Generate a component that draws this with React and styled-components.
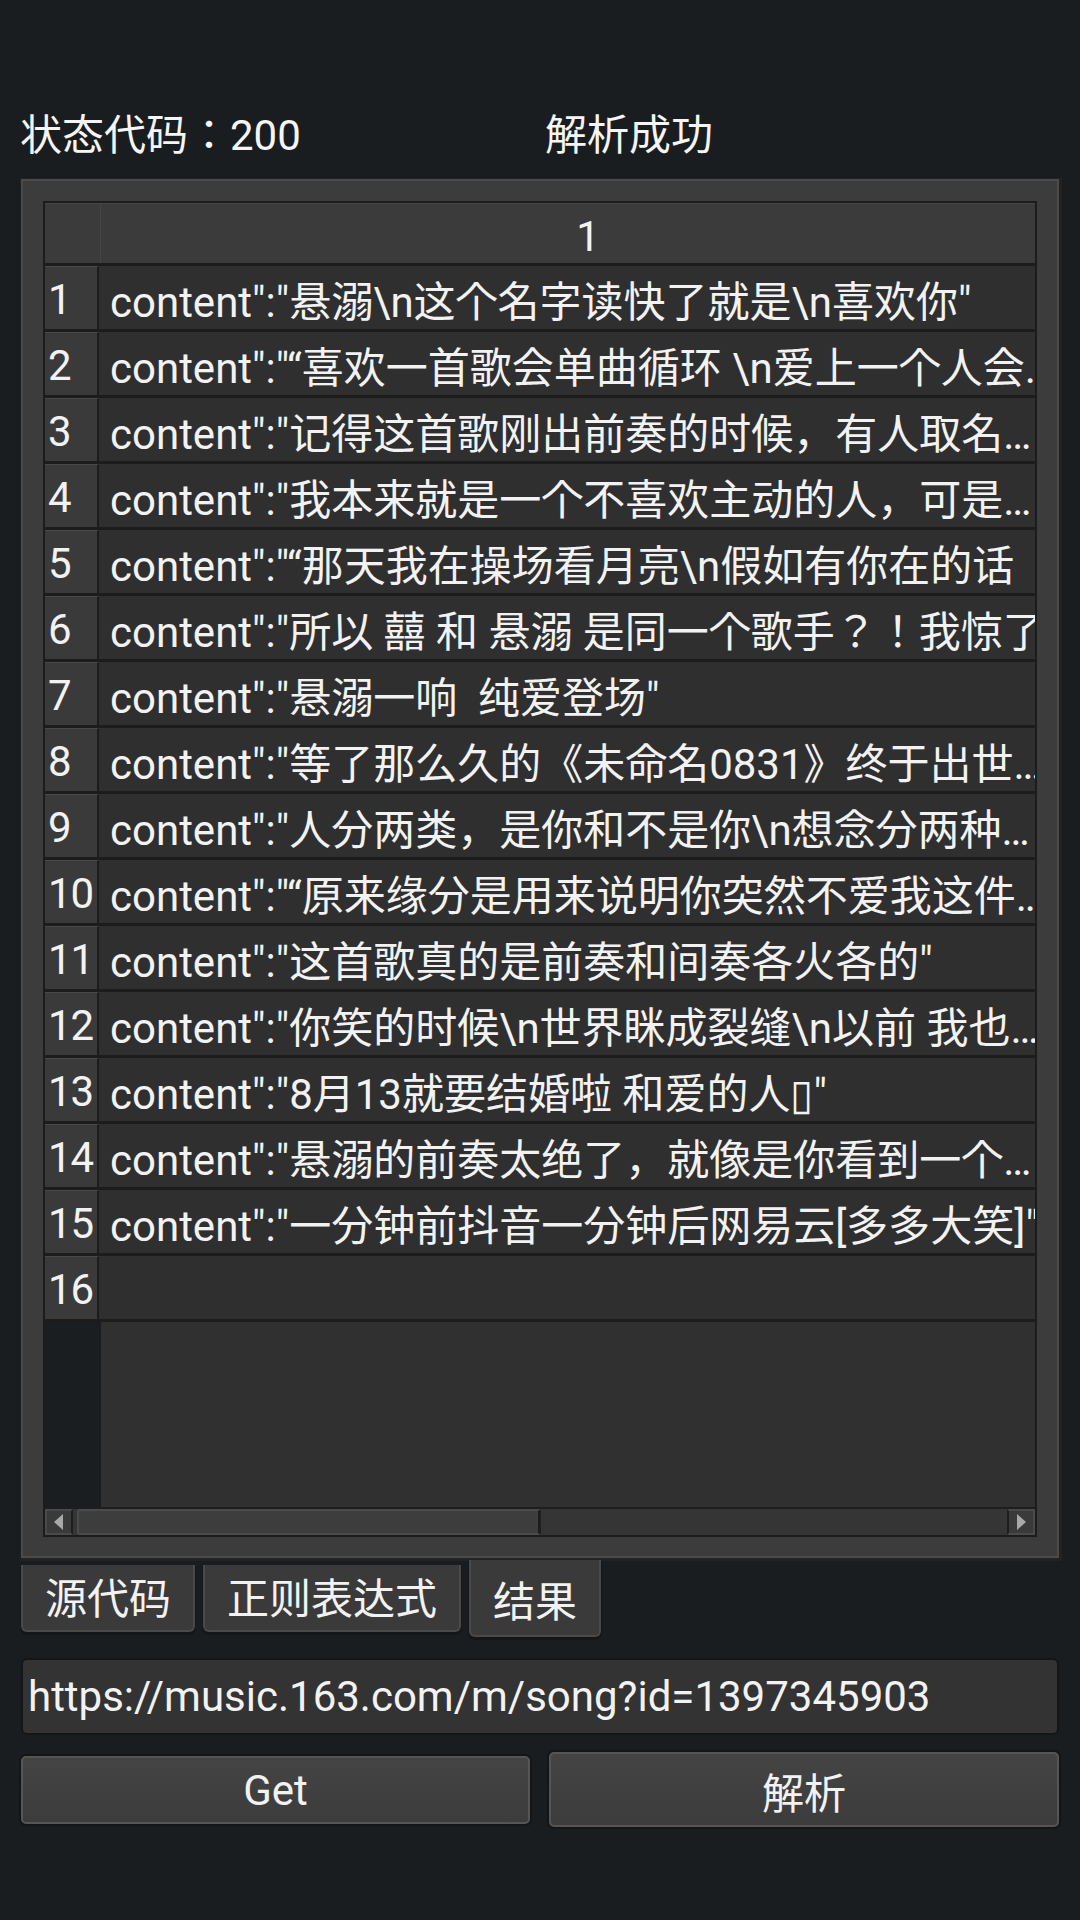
import React from 'react';
import styled, { createGlobalStyle } from 'styled-components';

const Global = createGlobalStyle`
  html, body { margin: 0; padding: 0; background: #1a1d20; }
  body {
    width: 1080px; height: 1920px; overflow: hidden;
    font-family: Roboto, "Noto Sans CJK JP", "Noto Sans CJK SC", sans-serif;
    color: #f2f2f2;
  }
`;

const Page = styled.div`
  width: 1080px; height: 1920px; box-sizing: border-box;
  padding: 108px 21px 0 21px;
  display: flex; flex-direction: column;
`;

const StatusBar = styled.div`
  display: grid; grid-template-columns: 525px 1fr;
  height: 56px; align-items: center;
  font-size: 42px; line-height: 56px; color: #f5f5f5;
  margin-left: -1px;
`;

const Panel = styled.div`
  margin-top: 15px; height: 1379px; box-sizing: border-box;
  background: #3c3c3c;
  border: 2px solid #4a4a4a;
  box-shadow: 0 0 0 1px #202224, 1px 1px 0 2px #222;
  padding: 20px 20px 19px 20px;
  display: flex;
`;

const Table = styled.div`
  flex: 1; display: flex; flex-direction: column;
  border: 2px solid #1b1c1d; background: #303030;
  overflow: hidden;
`;

const HeaderRow = styled.div`
  display: flex; height: 63px; box-sizing: border-box; flex: none;
  border-bottom: 3px solid #1c1c1c;
  background: #3b3b3b; border-top: 1px solid #474747;
`;

const Corner = styled.div`
  width: 55px; border-right: 1px solid #454545; flex: none;
`;

const HeaderCell = styled.div`
  flex: 1; display: flex; align-items: center; justify-content: center;
  padding: 6px 0 0 40px; font-size: 42px; color: #f2f2f2;
`;

const Row = styled.div`
  display: flex; height: 66px; box-sizing: border-box; flex: none;
  border-bottom: 3px solid #1c1c1c;
`;

const NumCell = styled.div`
  width: 54px; flex: none; box-sizing: border-box;
  background: #3a3a3a; border-top: 1px solid #4a4a4a;
  border-right: 2px solid #1c1c1c;
  display: flex; align-items: center; padding: 2px 0 0 3px;
  font-size: 42px; color: #f2f2f2; letter-spacing: -1px;
`;

const DataCell = styled.div`
  flex: 1; background: #2f2f2f; display: flex; align-items: center;
  padding: 1px 0 0 11px; overflow: hidden; white-space: pre;
  font-size: 42px; color: #f2f2f2;
`;

const Filler = styled.div`
  flex: 1; display: flex;
`;

const FillerNum = styled.div`
  width: 54px; flex: none; background: #1b1e21; border-right: 2px solid #1c1c1c;
`;

const FillerData = styled.div`
  flex: 1; background: #303030;
`;

const ScrollBar = styled.div`
  height: 28px; flex: none; display: flex; box-sizing: border-box;
  background: #353535; border-top: 2px solid #1e1e1e;
`;

const ArrowBtn = styled.div`
  width: 28px; flex: none; box-sizing: border-box;
  background: #3a3a3a; border: 2px solid #4a4a4a;
  display: flex; align-items: center; justify-content: center;
  ${p => p.$right ? 'border-left: 2px solid #1e1e1e; margin-left: auto;' : 'border-right: 2px solid #1e1e1e;'}
`;

const Thumb = styled.div`
  width: 464px; margin-left: 4px; box-sizing: border-box;
  background: #3d3d3d; border: 2px solid #4b4b4b; border-radius: 3px;
  border-right: 3px solid #1e1e1e;
`;

const Tabs = styled.div`
  display: flex; gap: 8px; align-items: flex-start;
  margin-top: 2px; height: 77px;
`;

const Tab = styled.div`
  box-sizing: border-box; padding: ${p => p.$active ? '10px' : '4px'} 22px 0;
  height: ${p => p.$active ? '77px' : '67px'};
  margin-top: ${p => p.$active ? '0' : '5px'};
  background: #3a3a3a;
  border: 2px solid #4a4a4a; border-top: none;
  border-radius: 0 0 6px 6px;
  box-shadow: 0 2px 0 1px #151617;
  display: flex; align-items: center; justify-content: center;
  font-size: 42px; line-height: 1; color: #f2f2f2;
`;

const UrlInput = styled.div`
  margin-top: 21px; height: 77px; box-sizing: border-box;
  background: #333333; border: 2px solid #141516; border-radius: 6px;
  display: flex; align-items: center; padding-left: 5px;
  font-size: 42px; color: #f2f2f2;
`;

const Buttons = styled.div`
  margin-top: 17px; height: 75px;
  display: grid; grid-template-columns: 509px 1fr; gap: 19px; align-items: center;
`;

const Button = styled.div`
  height: ${p => p.$tall ? '75px' : '68px'}; box-sizing: border-box;
  background: linear-gradient(#444444, #3c3c3c);
  border: 2px solid #555555; border-radius: 5px;
  box-shadow: 0 0 0 2px #141516;
  display: flex; align-items: center; justify-content: center;
  padding-top: 2px;
  font-size: 42px; color: #f2f2f2;
`;

const Arrow = ({ right }) => (
  <svg width="12" height="18" viewBox="0 0 12 18">
    {right
      ? <polygon points="2,1 11,9 2,17" fill="#a9a9a9" />
      : <polygon points="10,1 1,9 10,17" fill="#a9a9a9" />}
  </svg>
);

const rows = [
  'content":"悬溺\\n这个名字读快了就是\\n喜欢你"',
  'content":"“喜欢一首歌会单曲循环 \\n爱上一个人会…',
  'content":"记得这首歌刚出前奏的时候，有人取名…',
  'content":"我本来就是一个不喜欢主动的人，可是…',
  'content":"“那天我在操场看月亮\\n假如有你在的话',
  'content":"所以 囍 和 悬溺 是同一个歌手？！我惊了"',
  'content":"悬溺一响  纯爱登场"',
  'content":"等了那么久的《未命名0831》终于出世…',
  'content":"人分两类，是你和不是你\\n想念分两种…',
  'content":"“原来缘分是用来说明你突然不爱我这件…',
  'content":"这首歌真的是前奏和间奏各火各的"',
  'content":"你笑的时候\\n世界眯成裂缝\\n以前 我也…',
  'content":"8月13就要结婚啦 和爱的人▯"',
  'content":"悬溺的前奏太绝了，就像是你看到一个…',
  'content":"一分钟前抖音一分钟后网易云[多多大笑]"',
  '',
];

export default function App() {
  return (
    <>
      <Global />
      <Page>
        <StatusBar>
          <span>状态代码：200</span>
          <span>解析成功</span>
        </StatusBar>
        <Panel>
          <Table>
            <HeaderRow>
              <Corner />
              <HeaderCell>1</HeaderCell>
            </HeaderRow>
            {rows.map((text, i) => (
              <Row key={i}>
                <NumCell>{i + 1}</NumCell>
                <DataCell>{text}</DataCell>
              </Row>
            ))}
            <Filler>
              <FillerNum />
              <FillerData />
            </Filler>
            <ScrollBar>
              <ArrowBtn><Arrow /></ArrowBtn>
              <Thumb />
              <ArrowBtn $right><Arrow right /></ArrowBtn>
            </ScrollBar>
          </Table>
        </Panel>
        <Tabs>
          <Tab>源代码</Tab>
          <Tab>正则表达式</Tab>
          <Tab $active>结果</Tab>
        </Tabs>
        <UrlInput>https://music.163.com/m/song?id=1397345903</UrlInput>
        <Buttons>
          <Button>Get</Button>
          <Button $tall>解析</Button>
        </Buttons>
      </Page>
    </>
  );
}
